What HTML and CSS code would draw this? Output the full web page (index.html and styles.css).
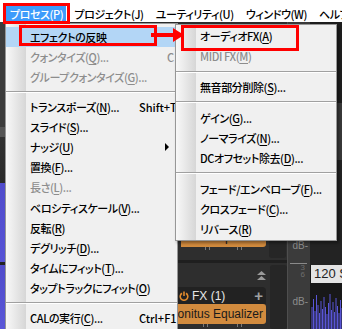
FILE: index.html
```html
<!DOCTYPE html>
<html lang="ja">
<head>
    <meta charset="UTF-8">
    <title>プロセス メニュー</title>
    <link rel="stylesheet" href="styles.css">
</head>
<body>
<div class="screen">
    <div class="menubar">
        <div class="bar-item active">プロセス(P)</div>
        <div class="bar-item">プロジェクト(J)</div>
        <div class="bar-item">ユーティリティ(U)</div>
        <div class="bar-item">ウィンドウ(W)</div>
        <div class="bar-item">ヘルプ(H)</div>
    </div>

    <!-- 背景のDAW画面 -->
    <div class="desk">
        <div class="edge"></div>
        <div class="under"></div>
        <div class="fxcol">
            <div class="fx-upper">
                <div class="fx-stack">
                    <div class="plug">Sonitus Equalizer</div>
                    <div class="pins"><i></i><i></i></div>
                </div>
                <div class="slot short"></div>
            </div>
            <div class="fx-lower">
                <div class="fx-stack">
                    <div class="fx-tools">
                        <svg width="9" height="9" viewBox="0 0 9 9"><path d="M4.5 0L9 4H0z M4.5 5L9 9H0z" fill="#9a9a9a"/></svg>
                    </div>
                    <div class="fx-head">
                        <svg class="power" width="10" height="10" viewBox="0 0 10 10"><path d="M3 2.2A3.8 3.8 0 1 0 7 2.2" fill="none" stroke="#e08a2c" stroke-width="1.6"/><path d="M5 0.5V5" stroke="#e08a2c" stroke-width="1.6"/></svg>
                        <span>FX (1)</span>
                        <span class="plus">+</span>
                    </div>
                    <div class="plug">Sonitus Equalizer</div>
                    <div class="pins"><i></i><i></i></div>
                </div>
                <div class="slot"></div>
            </div>
        </div>
        <div class="meter">
            <div class="db first">dB-</div>
            <div class="tick"></div>
            <div class="num">3</div>
            <div class="num">6</div>
            <div class="db last">dB-</div>
        </div>
        <div class="track">
            <div class="track-top"></div>
            <div class="clip-label">120 S</div>
            <svg class="wave" width="32" height="46" viewBox="0 0 32 46">
                <path d="M1 46V24M2.5 46V16M4 46V28M5.5 46V12M7 46V22M8.5 46V30M10 46V18M11.5 46V26M13 46V14M14.5 46V24M16 46V31M17.5 46V20M19 46V11M20.5 46V27M22 46V19M23.5 46V29M25 46V15M26.5 46V23M28 46V30M29.5 46V17M31 46V25" stroke="#5955d6" stroke-width="1"/>
            </svg>
        </div>
    </div>

    <div class="menu main">
        <div class="item hot"><span class="lbl">エフェクトの反映</span></div>
        <div class="item off"><span class="lbl">クォンタイズ(<u>Q</u>)...</span><span class="key far">C</span></div>
        <div class="item off"><span class="lbl">グループクォンタイズ(<u>G</u>)...</span></div>
        <div class="sep"></div>
        <div class="item"><span class="lbl">トランスポーズ(<u>N</u>)...</span><span class="key">Shift+T</span></div>
        <div class="item"><span class="lbl">スライド(<u>S</u>)...</span></div>
        <div class="item"><span class="lbl">ナッジ(<u>U</u>)</span><span class="arrow-sub"></span></div>
        <div class="item"><span class="lbl">置換(<u>F</u>)...</span></div>
        <div class="item off"><span class="lbl">長さ(<u>L</u>)...</span></div>
        <div class="item"><span class="lbl">ベロシティスケール(<u>V</u>)...</span></div>
        <div class="item"><span class="lbl">反転(<u>R</u>)</span></div>
        <div class="item"><span class="lbl">デグリッチ(<u>D</u>)...</span></div>
        <div class="item"><span class="lbl">タイムにフィット(<u>T</u>)...</span></div>
        <div class="item"><span class="lbl">タップトラックにフィット(<u>O</u>)</span></div>
        <div class="sep"></div>
        <div class="item"><span class="lbl">CALの実行(<u>C</u>)...</span><span class="key">Ctrl+F1</span></div>
    </div>

    <div class="menu sub">
        <div class="item"><span class="lbl">オーディオFX(<u>A</u>)</span></div>
        <div class="item off"><span class="lbl">MIDI FX(<u>M</u>)</span></div>
        <div class="sep"></div>
        <div class="item"><span class="lbl">無音部分削除(<u>S</u>)...</span></div>
        <div class="sep"></div>
        <div class="item"><span class="lbl">ゲイン(<u>G</u>)...</span></div>
        <div class="item"><span class="lbl">ノーマライズ(<u>N</u>)...</span></div>
        <div class="item"><span class="lbl">DCオフセット除去(<u>D</u>)...</span></div>
        <div class="sep"></div>
        <div class="item"><span class="lbl">フェード/エンベロープ(<u>F</u>)...</span></div>
        <div class="item"><span class="lbl">クロスフェード(<u>C</u>)...</span></div>
        <div class="item"><span class="lbl">リバース(<u>R</u>)</span></div>
    </div>

    <!-- 赤い注釈 -->
    <div class="mark mark-bar"></div>
    <div class="mark mark-effect"></div>
    <div class="mark mark-audio"></div>
    <svg class="pointer" width="36" height="16" viewBox="0 0 36 16">
        <path d="M1 8H25" stroke="#f00" stroke-width="4"/>
        <path d="M23 1L34 8L23 15z" fill="#f00"/>
    </svg>
</div>
</body>
</html>
```

FILE: styles.css
```css
body {
    margin: 0;
    background-color: #1e1e1e;
    font-family: "Noto Sans CJK JP", sans-serif;
    font-feature-settings: "palt";
    overflow: hidden;
}
.screen {
    position: relative;
    width: 342px;
    height: 329px;
    overflow: hidden;
}

/* メニューバー */
.menubar {
    height: 22px;
    box-sizing: border-box;
    background-color: #fff;
    display: flex;
    align-items: flex-end;
    padding-left: 6px;
    font-size: 11px;
    font-weight: 500;
    letter-spacing: -0.4px;
    white-space: nowrap;
}
.bar-item {
    height: 16px;
    line-height: 16px;
    padding: 0 4px;
    margin-right: 4px;
    color: #000;
}
.bar-item.active {
    background-color: #3d9bfb;
    color: #fff;
    padding-right: 3px;
}

/* 背景 */
.desk {
    display: grid;
    grid-template-columns: 5px 173px 109px 23px 32px;
    height: 307px;
}
.edge {
    background: linear-gradient(to bottom,
        #3c3c3c 0, #3c3c3c 105px, #555 105px, #555 115px,
        #323232 115px, #2a2a2a 161px, #504ccb 161px, #5753d6 240px,
        #222 240px, #222 243px, #504ccb 243px, #5a57d8 100%);
}
.under {
    background-color: #2a2a2a;
}
.fxcol {
    display: flex;
    flex-direction: column;
    background-color: #2e2e2e;
}
.fx-upper {
    height: 241px;
    box-sizing: border-box;
    display: grid;
    grid-template-columns: 88px 17px;
    column-gap: 3px;
    align-items: end;
    padding-bottom: 2px;
    border-bottom: 3px solid #1f1f1f;
}
.fx-upper .fx-stack {
    padding-left: 3px;
    margin-bottom: 7px;
}
.fx-stack {
    display: flex;
    flex-direction: column;
}
.plug {
    height: 20px;
    line-height: 20px;
    background-color: #d28b3e;
    color: #1a1a1a;
    font-family: "Liberation Sans", sans-serif;
    font-size: 12px;
    white-space: nowrap;
    overflow: hidden;
    display: flex;
    justify-content: flex-end;
    padding-right: 3px;
    border-radius: 0 3px 3px 0;
}
.pins {
    height: 4px;
    display: flex;
    justify-content: space-around;
    padding: 0 10px;
}
.pins i {
    width: 3px;
    height: 3px;
    border-left: 1px solid #7a7a7a;
    border-right: 1px solid #7a7a7a;
}
.slot {
    background-color: #262626;
    border-radius: 3px;
    align-self: stretch;
    margin-top: 2px;
}
.slot.short {
    height: 20px;
    align-self: end;
}
.fx-lower {
    flex: 1;
    display: grid;
    grid-template-columns: 88px 17px;
    column-gap: 4px;
}
.fx-tools {
    height: 24px;
    display: flex;
    justify-content: flex-end;
    align-items: center;
}
.fx-head {
    height: 17px;
    background-color: #222;
    border-radius: 0 4px 0 0;
    display: flex;
    align-items: center;
    gap: 3px;
    color: #e6e6e6;
    font-family: "Liberation Sans", sans-serif;
    font-size: 12px;
}
.fx-head .power {
    margin-left: 1px;
}
.fx-head .plus {
    margin-left: auto;
    margin-right: 3px;
    color: #a0a0a0;
    font-size: 15px;
    font-weight: bold;
}
.meter {
    background-color: #3b3b3b;
    border-left: 1px solid #4e4e4e;
    display: flex;
    flex-direction: column;
    align-items: flex-end;
    color: #8c8c8c;
    font-family: "Liberation Sans", sans-serif;
    font-size: 10px;
    line-height: 8px;
}
.db.first {
    margin-top: 220px;
    padding-right: 2px;
}
.tick {
    width: 17px;
    height: 1px;
    background-color: #8a8a8a;
    margin: 13px 3px 0 0;
}
.num {
    font-size: 8px;
    line-height: 7px;
    padding-right: 5px;
    color: #6e6e6e;
}
.num:nth-of-type(1) {
    margin-top: 23px;
}
.db.last {
    margin-top: 20px;
    padding-right: 2px;
}
.track {
    display: flex;
    flex-direction: column;
    background-color: #181818;
}
.track-top {
    height: 243px;
    background: linear-gradient(to bottom,
        #1e1e1e 0, #1e1e1e 81px, #3a3a3a 81px, #3a3a3a 138px, #232323 138px);
}
.clip-label {
    height: 18px;
    line-height: 18px;
    margin-left: 1px;
    background-color: #e4e4e4;
    color: #222;
    font-family: "Liberation Sans", sans-serif;
    font-size: 13px;
    padding-left: 3px;
    white-space: nowrap;
    overflow: hidden;
}
.wave {
    display: block;
    margin-left: 1px;
}

/* メニュー */
.menu {
    position: absolute;
    box-sizing: border-box;
    border: 1px solid #979797;
    background: linear-gradient(to right, #f8f8f8, #d6d6d6) 0 0 / 20px 100% no-repeat, #f0f0f0;
    font-size: 11px;
    font-weight: 500;
    letter-spacing: -0.4px;
    color: #000;
}
.main {
    left: 5px;
    top: 23px;
    width: 173px;
    height: 310px;
    padding-top: 3px;
}
.sub {
    left: 175px;
    top: 24px;
    width: 162px;
    padding: 1px 0;
    box-shadow: 2px 2px 3px rgba(0, 0, 0, 0.4);
}
.item {
    height: 20.2px;
    display: grid;
    grid-template-columns: 109px 1fr;
    align-items: center;
    padding-left: 24px;
    white-space: nowrap;
    line-height: 20px;
}
.item.hot {
    background-color: #b3d6f6;
}
.item.off {
    color: #8d8d8d;
}
.item u {
    text-underline-offset: 2px;
}
.lbl {
    grid-column: 1;
    grid-row: 1;
}
.key {
    grid-column: 2;
    grid-row: 1;
    letter-spacing: 0;
}
.key.far {
    padding-left: 28px;
}
.arrow-sub {
    grid-column: 2;
    grid-row: 1;
    justify-self: end;
    margin-right: 8px;
    width: 0;
    height: 0;
    border-top: 4px solid transparent;
    border-bottom: 4px solid transparent;
    border-left: 4px solid #000;
}
.sep {
    height: 9px;
    display: flex;
    align-items: center;
}
.sub .sep {
    height: 10.5px;
}
.sep::before {
    content: "";
    flex: 1;
    border-top: 1px solid #a0a0a0;
    border-bottom: 1px solid #fff;
}

/* 注釈 */
.mark {
    position: absolute;
    box-sizing: border-box;
    border: 3px solid #f00;
}
.mark-bar {
    left: 3px;
    top: 3px;
    width: 67px;
    height: 21px;
}
.mark-effect {
    left: 19px;
    top: 25px;
    width: 138px;
    height: 21px;
}
.mark-audio {
    left: 181px;
    top: 25px;
    width: 118px;
    height: 26px;
}
.pointer {
    position: absolute;
    left: 150px;
    top: 27px;
}
```
